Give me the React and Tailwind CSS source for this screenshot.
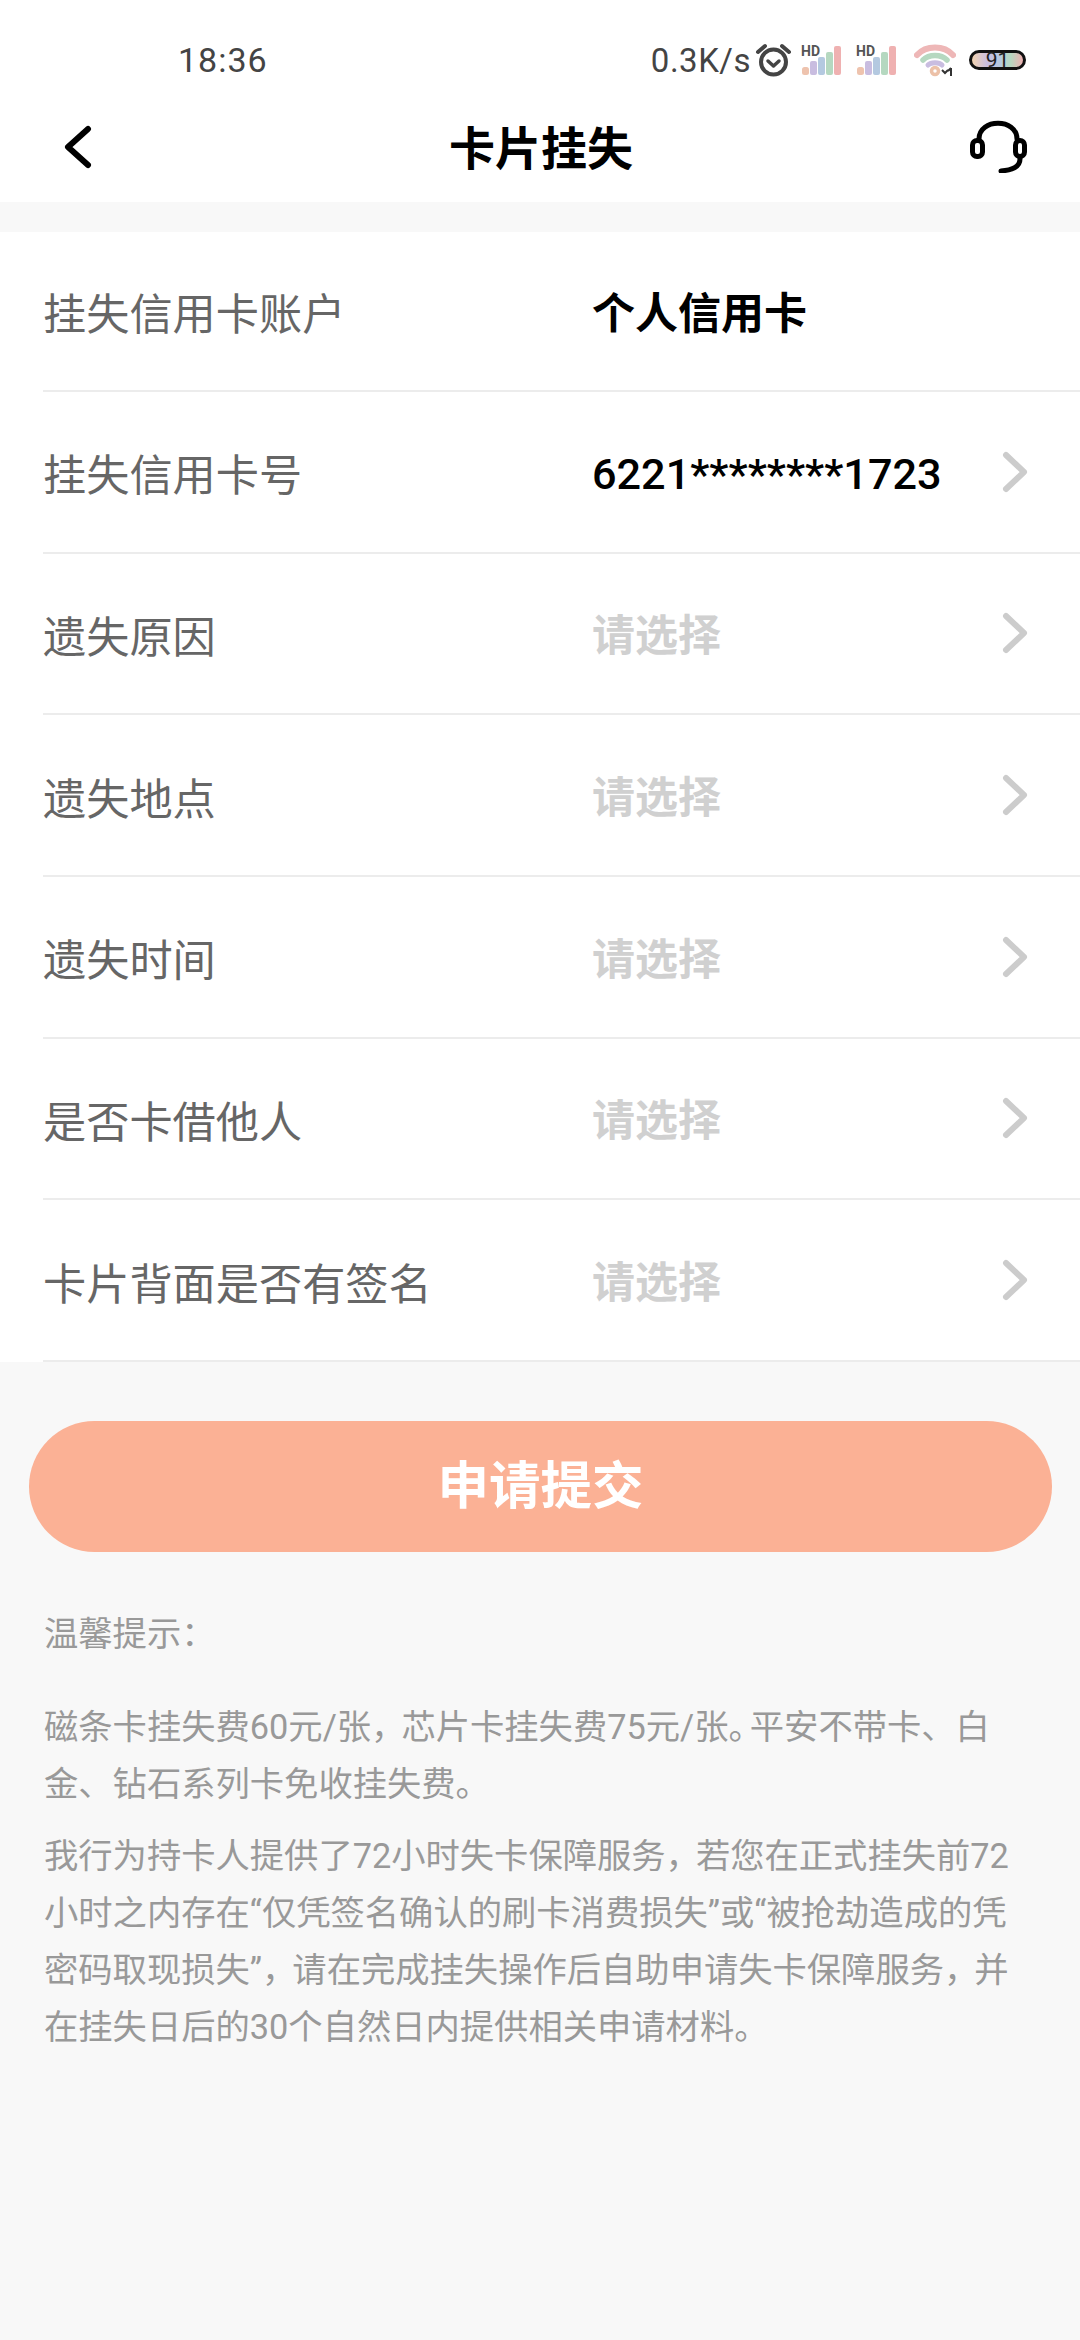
import React from "react";

const cjk = { fontFamily: '"Noto Sans CJK SC", sans-serif' };
const rows = [
  ["挂失信用卡账户", "个人信用卡", "strong", false],
  ["挂失信用卡号", "6221********1723", "num", true],
  ["遗失原因", "请选择", "ph", true],
  ["遗失地点", "请选择", "ph", true],
  ["遗失时间", "请选择", "ph", true],
  ["是否卡借他人", "请选择", "ph", true],
  ["卡片背面是否有签名", "请选择", "ph", true],
];

function Signal() {
  return (
    <svg className="overflow-visible" width="39" height="30" viewBox="0 0 39 30">
      <text x="-1" y="11" fontSize="14" fontWeight="700" fill="#555" fontFamily="Roboto, sans-serif">HD</text>
      <rect x="0" y="22" width="7" height="8" rx="2.5" fill="#eec3ae" />
      <rect x="8" y="16" width="7" height="14" rx="2" fill="#c9bde0" />
      <rect x="16" y="12" width="7" height="18" rx="2" fill="#b4c9e0" />
      <rect x="24" y="7" width="7" height="23" rx="2" fill="#b5d8c0" />
      <rect x="32" y="1" width="7" height="29" rx="2" fill="#efb1b1" />
    </svg>
  );
}

function Row({ label, value, kind, chevron, first }) {
  const valueClass =
    kind === "strong"
      ? "text-[43px] font-bold text-black mt-[6px]"
      : kind === "num"
      ? "text-[43.2px] font-medium text-black mt-[6px]"
      : "text-[43px] font-bold text-[#d0d0d0] mt-[7px]";
  return (
    <div className={`ml-[43px] ${first ? "h-[160px]" : "h-[161.67px]"} flex items-center border-b-2 border-[#ececec]`}>
      <div className="w-[549px] mt-[2px] text-[43.2px] text-[#666666] leading-none" style={cjk}>{label}</div>
      <div
        className={`${valueClass} leading-none`}
        style={{ fontFamily: '"Roboto", "Noto Sans CJK SC", sans-serif' }}
      >
        {value}
      </div>
      {chevron && (
        <svg className="ml-auto mr-[52px]" width="26" height="42" viewBox="0 0 26 42" fill="none">
          <path d="M4 4 L22 21 L4 38" stroke="#cccccc" strokeWidth="6" strokeLinecap="round" strokeLinejoin="round" />
        </svg>
      )}
    </div>
  );
}

export default function App() {
  return (
    <div className="w-[1080px] h-[2340px] bg-[#f8f8f8] overflow-hidden flex flex-col">
      <div className="bg-white h-[202px] shrink-0">
        <div className="h-[88px] pt-[32px] flex items-center pl-[178px] pr-[54px]">
          <span className="text-[34px] text-[#444444] tracking-[1px] leading-none" style={{ fontFamily: "Roboto, sans-serif" }}>18:36</span>
          <span className="ml-auto text-[33px] text-[#444444] tracking-[0.5px] leading-none" style={{ fontFamily: "Roboto, sans-serif" }}>0.3K/s</span>
          <svg className="ml-[4px]" width="37" height="34" viewBox="0 0 37 34" fill="none">
            <circle cx="18.5" cy="19" r="12.5" stroke="#444" strokeWidth="4" />
            <path d="M13 18 L18.5 23 L24 18" stroke="#444" strokeWidth="3.5" strokeLinecap="round" strokeLinejoin="round" />
            <path d="M3 9 L10 3 M34 9 L27 3" stroke="#444" strokeWidth="4" strokeLinecap="round" />
          </svg>
          <div className="ml-[10px] flex"><Signal /></div>
          <div className="ml-[16px] flex"><Signal /></div>
          <svg className="ml-[18px]" width="42" height="33" viewBox="0 0 42 33" fill="none">
            <path d="M3 11 C12 1 30 1 39 11" stroke="#eeb7b7" strokeWidth="6" strokeLinecap="round" />
            <path d="M9 16 C15 10 27 10 33 16" stroke="#b5d8c0" strokeWidth="5.5" strokeLinecap="round" />
            <path d="M14 21 C17 18 25 18 28 21" stroke="#c9bde0" strokeWidth="5" strokeLinecap="round" />
            <circle cx="21" cy="27" r="3.5" stroke="#ecc1a8" strokeWidth="3.5" />
            <path d="M28 26 l3 3 l3 -3 M37 32 v-8 M34 27 l3 -3" stroke="#333" strokeWidth="2" />
          </svg>
          <div className="ml-[13px] w-[57px] h-[20px] rounded-full border-[3px] border-[#111111] flex items-center justify-center bg-[linear-gradient(90deg,#f2d3b0_0%,#c9bde0_30%,#b4c9e0_55%,#b5d8c0_75%,#eeb0b0_100%)]">
            <span className="text-[21px] text-[#222222] leading-none" style={{ fontFamily: "Roboto, sans-serif" }}>91</span>
          </div>
        </div>
        <div className="h-[114px] pt-[6px] flex items-center justify-between pl-[63px] pr-[52px]">
          <div className="w-[51px] -mt-[2px]">
            <svg width="30" height="44" viewBox="0 0 30 44" fill="none">
              <path d="M25 4 L5 22 L25 40" stroke="#000" strokeWidth="6" strokeLinecap="round" strokeLinejoin="round" />
            </svg>
          </div>
          <span className="text-[46px] font-bold text-black leading-none -mt-[6px]" style={cjk}>卡片挂失</span>
          <svg className="-mt-[4px]" width="60" height="54" viewBox="0 0 60 54" fill="none">
            <path d="M11 20 C11 -1 49 -1 49 20" stroke="#000" strokeWidth="5" strokeLinecap="round" />
            <rect x="4.5" y="21.5" width="10" height="16" rx="4.5" stroke="#000" strokeWidth="5" />
            <rect x="47.5" y="21.5" width="9" height="16" rx="4.5" stroke="#000" strokeWidth="5" />
            <path d="M52 40 C52 47 45 51 33 52" stroke="#000" strokeWidth="5" strokeLinecap="round" />
          </svg>
        </div>
      </div>

      <div className="mt-[30px] bg-white h-[1130px] shrink-0">
        {rows.map(([label, value, kind, chevron], i) => (
          <Row key={label} label={label} value={value} kind={kind} chevron={chevron} first={i === 0} />
        ))}
      </div>

      <div className="mt-[59px] ml-[29px] mr-[28px] h-[131px] rounded-full bg-[#fbb195] flex items-center justify-center shrink-0">
        <span className="text-[51.5px] font-bold text-white leading-none -mt-[9px]" style={cjk}>申请提交</span>
      </div>

      <div className="pl-[44px] mt-[54px] text-[34.3px] text-[#999999] whitespace-nowrap" style={{ fontFamily: '"Roboto", "Noto Sans CJK SC", sans-serif' }}>
        <p className="leading-[57px]">温馨提示：</p>
        <p className="mt-[36px] leading-[57px]">
          磁条卡挂失费60元/张<span className="tracking-[-4px]">，</span>芯片卡挂失费75元/张<span className="tracking-[-13px]">。</span>平安不带卡、白
          <br />
          金、钻石系列卡免收挂失费。
        </p>
        <p className="mt-[15px] leading-[57px]">
          我行为持卡人提供了72小时失卡保障服务<span className="tracking-[-4px]">，</span>若您在正式挂失前72
          <br />
          小时之内存在“仅凭签名确认的刷卡消费损失”或“被抢劫造成的凭
          <br />
          密码取现损失”<span className="tracking-[-4px]">，</span>请在完成挂失操作后自助申请失卡保障服务<span className="tracking-[-4px]">，</span>并
          <br />
          在挂失日后的30个自然日内提供相关申请材料。
        </p>
      </div>
    </div>
  );
}
